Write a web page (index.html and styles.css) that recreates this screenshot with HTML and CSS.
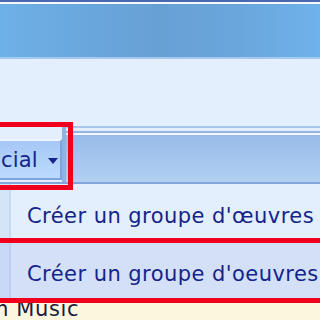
FILE: index.html
```html
<!DOCTYPE html>
<html>
<head>
<meta charset="utf-8">
<link rel="stylesheet" href="styles.css">
</head>
<body>
<div class="screen">
  <div class="top-dark"></div>
  <div class="top-white"></div>
  <div class="banner"></div>
  <div class="banner-edge"></div>
  <div class="gap"></div>
  <div class="toolbar">
    <div class="tb-line1"></div>
    <div class="tb-light"></div>
    <div class="tb-line2"></div>
    <div class="tb-white"></div>
    <div class="tb-band">
      <div class="tb-btn-slot">
        <div class="tb-btn">
          <span class="tb-label">cial</span>
          <span class="tb-arrow"></span>
        </div>
      </div>
      <div class="tb-sep"></div>
    </div>
    <div class="tb-bottom"></div>
  </div>
  <div class="menu">
    <div class="menu-row">
      <div class="menu-icon"></div>
      <div class="menu-text">Créer un groupe d'œuvres</div>
    </div>
    <div class="menu-row hover">
      <div class="menu-icon"></div>
      <div class="menu-text">Créer un groupe d'oeuvres</div>
    </div>
  </div>
  <div class="below">
    <span class="below-text">m Music</span>
  </div>
  <div class="mark mark-button"></div>
  <div class="mark mark-row"></div>
</div>
</body>
</html>
```
FILE: styles.css
```css
html, body {
  margin: 0;
  padding: 0;
}
body {
  background: #e3effc;
  font-family: "DejaVu Sans", Tahoma, sans-serif;
}
.screen {
  position: relative;
  width: 320px;
  height: 320px;
  overflow: hidden;
  background: #e3effc;
  display: flex;
  flex-direction: column;
}
.top-dark { height: 2px; background: #4a68b0; flex: none; }
.top-white { height: 2px; background: #f4f8ff; flex: none; }
.banner {
  height: 53px;
  flex: none;
  background: linear-gradient(to right, #6eb0e8 0%, #69a6dc 30%, #68a0d4 50%, #6aa6dc 75%, #70b2ec 100%);
}
.banner-edge { height: 2px; background: #a4c8ee; flex: none; }
.gap { height: 67px; flex: none; }
.toolbar { flex: none; display: flex; flex-direction: column; }
.tb-line1 { height: 2px; background: #a8c6ec; }
.tb-light { height: 3px; background: #e3effc; }
.tb-line2 { height: 2px; background: #90b4e4; }
.tb-white { height: 2px; background: #f2f7ff; }
.tb-band {
  height: 47px;
  background: linear-gradient(to bottom, #97bbe8, #b2d0f2);
  display: flex;
  position: relative;
}
.tb-btn-slot {
  width: 62px;
  background: #e3effc;
  margin-top: -9px;
  padding-top: 13px;
  display: flex;
  flex-direction: column;
}
.tb-btn {
  height: 37px;
  margin-left: -6px;
  border: 2px solid #7ea4dc;
  border-top-color: #eef5ff;
  border-left: none;
  background: linear-gradient(to bottom, #a6c8f6, #bcdafc);
  display: flex;
  align-items: center;
  padding-left: 7px;
  color: #14248a;
  font-size: 21px;
}
.tb-label { letter-spacing: 0.2px; }
.tb-arrow {
  margin-left: 10px;
  width: 0;
  height: 0;
  border-left: 5px solid transparent;
  border-right: 5px solid transparent;
  border-top: 6px solid #14248a;
  margin-top: 2px;
}
.tb-sep {
  width: 4px;
  background: #8eb2e2;
  margin-top: -9px;
}
.tb-bottom { height: 2px; background: #80a6dc; }

.menu { flex: none; display: flex; flex-direction: column; }
.menu-row {
  height: 58px;
  display: flex;
  background: #e3effc;
}
.menu-row:first-child { height: 57px; }
.menu-row.hover { background: #d3e0f8; }
.menu-icon {
  width: 9px;
  flex: none;
  background: #d5e5f8;
  border-right: 2px solid #c6dbf4;
}
.menu-row.hover .menu-icon {
  background: #c8d8f6;
  border-right-color: #bccff2;
}
.menu-text {
  padding-left: 16px;
  padding-top: 7px;
  display: flex;
  align-items: center;
  font-size: 21px;
  color: #14248a;
  white-space: nowrap;
  letter-spacing: 0.45px;
}
.below {
  flex: 1;
  background: #fdf6de;
  position: relative;
}
.below-text {
  position: absolute;
  left: -12px;
  top: -2px;
  font-size: 21px;
  letter-spacing: 0.6px;
  color: #1c1c3c;
  white-space: nowrap;
}
.mark {
  position: absolute;
  border: 5px solid #f0001c;
}
.mark-button {
  left: -10px;
  top: 122px;
  width: 73px;
  height: 58px;
}
.mark-row {
  left: -10px;
  top: 238px;
  width: 330px;
  height: 55px;
}
```
